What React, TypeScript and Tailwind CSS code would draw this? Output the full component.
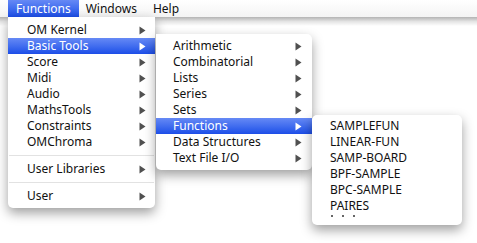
import React from "react";

const Arrow = ({ white }: { white?: boolean }) => (
  <svg width="7" height="9" viewBox="0 0 7 9" className="shrink-0">
    <path d="M0.5 0.5 L6.5 4.5 L0.5 8.5Z" fill={white ? "#ffffff" : "#505050"} />
  </svg>
);

const Row = ({
  label,
  active,
  arrow = true,
  pl,
  pr,
}: {
  label: string;
  active?: boolean;
  arrow?: boolean;
  pl: string;
  pr: string;
}) => (
  <div
    className={
      "flex h-[16px] items-center justify-between " +
      pl +
      " " +
      pr +
      (active
        ? " bg-gradient-to-b from-[#6689f5] to-[#1c4de8] text-white"
        : " text-[#111]")
    }
  >
    <span className="leading-none whitespace-nowrap">{label}</span>
    {arrow && <Arrow white={active} />}
  </div>
);

const Sep = () => (
  <div className="flex h-[11px] items-center px-[1px]">
    <div className="h-[1px] w-full bg-[#e2e2e2]" />
  </div>
);

export default function App() {
  const m1 = [
    "OM Kernel",
    "Basic Tools",
    "Score",
    "Midi",
    "Audio",
    "MathsTools",
    "Constraints",
    "OMChroma",
  ];
  const m2 = [
    "Arithmetic",
    "Combinatorial",
    "Lists",
    "Series",
    "Sets",
    "Functions",
    "Data Structures",
    "Text File I/O",
  ];
  const m3 = [
    "SAMPLEFUN",
    "LINEAR-FUN",
    "SAMP-BOARD",
    "BPF-SAMPLE",
    "BPC-SAMPLE",
    "PAIRES",
  ];
  return (
    <div
      className="relative h-[243px] w-[477px] overflow-hidden bg-white text-[12px]"
      style={{ fontFamily: '"Noto Sans", "DejaVu Sans", sans-serif' }}
    >
      {/* menu bar */}
      <div className="relative z-10 flex h-[17px] items-stretch bg-gradient-to-b from-white to-[#f4f4f4] pl-[8px] text-[#111]">
        <div className="flex items-center bg-gradient-to-b from-[#6689f5] to-[#1c4de8] px-[8px] text-white">
          <span className="leading-none">Functions</span>
        </div>
        <div className="flex items-center px-[7px]">
          <span className="leading-none">Windows</span>
        </div>
        <div className="flex items-center px-[9px]">
          <span className="leading-none">Help</span>
        </div>
      </div>
      <div className="h-[9px] w-full bg-gradient-to-b from-[#b4b4b4] via-[#e4e4e4] to-white" />

      {/* menu 1 */}
      <div className="absolute left-[8px] top-[17px] z-20 flex w-[147px] flex-col rounded-b-[5px] bg-white pb-[4px] pt-[5px] shadow-[0_5px_12px_rgba(0,0,0,0.38)]">
        {m1.map((l, i) => (
          <Row key={l} label={l} active={i === 1} pl="pl-[19px]" pr="pr-[9px]" />
        ))}
        <Sep />
        <Row label="User Libraries" pl="pl-[19px]" pr="pr-[9px]" />
        <Sep />
        <Row label="User" pl="pl-[19px]" pr="pr-[9px]" />
      </div>

      {/* menu 2 */}
      <div className="absolute left-[156px] top-[34px] z-30 flex w-[156px] flex-col rounded-b-[5px] rounded-tr-[5px] bg-white pb-[4px] pt-[4px] shadow-[0_5px_12px_rgba(0,0,0,0.38)]">
        {m2.map((l, i) => (
          <Row key={l} label={l} active={i === 5} pl="pl-[17px]" pr="pr-[10px]" />
        ))}
      </div>

      {/* menu 3 */}
      <div className="absolute left-[312px] top-[115px] z-40 flex h-[110px] w-[150px] flex-col overflow-hidden rounded-[5px] bg-white pt-[3px] shadow-[0_5px_12px_rgba(0,0,0,0.38)]">
        {m3.map((l) => (
          <Row key={l} label={l} arrow={false} pl="pl-[18px]" pr="pr-[10px]" />
        ))}
        <div className="flex gap-[9px] pl-[19px] pt-[1px]">
          <span className="h-[2px] w-[2px] rounded-full bg-[#333]" />
          <span className="h-[2px] w-[2px] rounded-full bg-[#333]" />
          <span className="h-[2px] w-[2px] rounded-full bg-[#333]" />
        </div>
      </div>
    </div>
  );
}
